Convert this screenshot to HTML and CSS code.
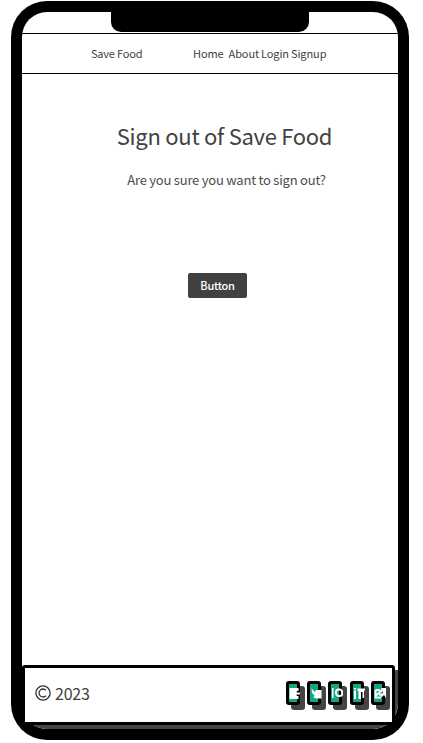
FILE: index.html
```
<!DOCTYPE html>
<html lang="en">
<head>
<meta charset="utf-8">
<title>Save Food</title>
<link rel="stylesheet" href="styles.css">
</head>
<body>
<div class="device">
  <div class="screen">
    <div class="notch"></div>
    <header class="nav">
      <span class="brand">Save Food</span>
      <nav class="links"><a class="home">Home</a><a>About</a><a>Login</a><a>Signup</a></nav>
    </header>
    <main class="content">
      <h1>Sign out of Save Food</h1>
      <p>Are you sure you want to sign out?</p>
      <button class="btn">Button</button>
    </main>
    <div class="footer-shade"></div>
  </div>
  <footer class="footer">
    <div class="copy"><svg class="c-mark" viewBox="0 0 16 16"><circle cx="8" cy="8" r="7.1"/><path d="M11 5.3A4 4 0 1 0 11 10.7"/></svg><span>2023</span></div>
    <div class="social">
      <a class="tile"><svg viewBox="0 0 12 12"><path d="M.5 1h9v3H7.500v1.500H11v2H7.500V9h2v3h-9z"/></svg></a>
      <a class="tile"><svg viewBox="0 0 12 12"><path d="M1.500 1.500 5 5l1-2h5.500v8.500H6L3 10l2-1-3-3z"/></svg></a>
      <a class="tile"><svg viewBox="0 0 12 12"><path d="M1 1h1.500v10H1z"/><path class="line" d="M9 2.500H7.500Q5 2.500 5 5.500T7.500 9H9Q11.300 9 11.300 6T9 2.500"/></svg></a>
      <a class="tile"><svg viewBox="0 0 12 12"><path d="M1 1h2v1.500H1zM1 3.500h2V12H1zM4.500 1.500H12v2h-1v7.500H9.500V5H8v7H5.500V4h-1z"/></svg></a>
      <a class="tile"><svg viewBox="0 0 12 12"><path class="line" d="M1.500 3H6M1.500 3v7.500H7M2 8.500 9.500 2M5 7.500h4"/><path d="M7 1h5v10l-2-3-2 2-2-1 3-3z"/></svg></a>
    </div>
  </footer>
</div>
</body>
</html>
```
FILE: styles.css
```
* { box-sizing: border-box; }
body {
  margin: 0;
  background: #fff;
  color: #414141;
  font-family: "Noto Sans CJK SC", "Noto Sans", sans-serif;
}
.device {
  display: grid;
  width: 398px;
  height: 739px;
  margin: 1px 0 0 11px;
  padding: 11px;
  background: #000;
  border-radius: 36px;
}
.screen {
  grid-area: 1 / 1;
  position: relative;
  display: flex;
  flex-direction: column;
  background: #fff;
  border-radius: 25px;
  overflow: hidden;
}
.notch {
  width: 198px;
  height: 20px;
  margin: 0 0 1px 89px;
  background: #000;
  border-radius: 0 0 10px 10px;
}
.nav {
  display: flex;
  align-items: center;
  height: 41px;
  padding: 0 0 2px 69px;
  border: solid #000;
  border-width: 1px 0;
  font-size: 11px;
  line-height: 16px;
  letter-spacing: -0.100px;
  white-space: nowrap;
}
.brand { width: 102px; letter-spacing: -0.200px; }
.links { display: flex; gap: 2px; }
.home { margin-right: 3px; }
.content {
  display: flex;
  flex-direction: column;
  align-items: center;
  padding-top: 43px;
}
h1 {
  margin: 0 0 0 29px;
  font-size: 22px;
  font-weight: 400;
  line-height: 36px;
  letter-spacing: -0.280px;
}
p {
  margin: 17px 0 0 33px;
  font-size: 13px;
  line-height: 20px;
  letter-spacing: -0.220px;
  color: #4c4c4c;
}
.btn {
  width: 59px;
  height: 25px;
  margin: 83px 0 0 15px;
  padding: 0;
  border: 0;
  border-radius: 2px;
  background: #414141;
  color: #fff;
  font: 500 11px/25px "Noto Sans CJK SC", sans-serif;
  letter-spacing: -0.300px;
}
.footer-shade {
  position: absolute;
  inset: 658px 0 0 5px;
  background: #444;
}
.footer {
  grid-area: 1 / 1;
  align-self: end;
  position: relative;
  display: flex;
  align-items: center;
  justify-content: space-between;
  width: 373px;
  height: 60px;
  margin-bottom: 4px;
  padding: 0 7px 3px 10px;
  background: #fff;
  border: 3px solid #000;
  border-radius: 3px;
}
.copy {
  display: flex;
  align-items: center;
  gap: 4px;
  margin-top: -1px;
  font-size: 16px;
  line-height: 24px;
  letter-spacing: -0.200px;
}
.c-mark {
  width: 16px;
  height: 16px;
  fill: none;
  stroke: #333;
  stroke-width: 1.300;
}
.social { display: flex; gap: 7.300px; margin-top: -1px; }
.tile {
  width: 14px;
  height: 24px;
  padding-top: 3px;
  background: #12a884;
  border: 3px solid #000;
  border-radius: 3px;
  box-shadow: 5px 5px 0 #444;
}
.tile svg {
  display: block;
  width: 12px;
  height: 12px;
  fill: #fff;
}
.tile .line { fill: none; stroke: #fff; stroke-width: 2; }
```
